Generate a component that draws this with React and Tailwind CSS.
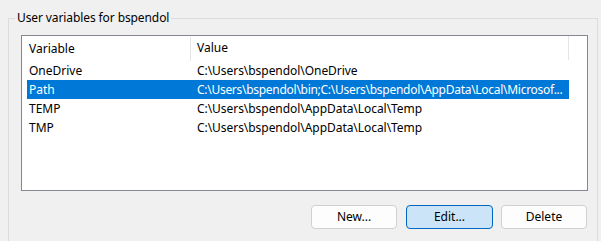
export default function App() {
  const rows = [
    { name: "OneDrive", value: "C:\\Users\\bspendol\\OneDrive" },
    { name: "Path", value: "C:\\Users\\bspendol\\bin;C:\\Users\\bspendol\\AppData\\Local\\Microsof...", selected: true },
    { name: "TEMP", value: "C:\\Users\\bspendol\\AppData\\Local\\Temp" },
    { name: "TMP", value: "C:\\Users\\bspendol\\AppData\\Local\\Temp" },
  ];
  return (
    <div
      className="w-[601px] h-[241px] bg-[#f0f0f0] overflow-hidden text-[12px] text-black"
      style={{ fontFamily: '"Noto Sans", "Open Sans", sans-serif' }}
    >
      <div className="relative ml-[8px] mt-[18px] w-[590px] h-[240px] border border-[#dcdcdc] pl-[12px] pt-[16px]">
        <div className="absolute left-[6px] top-[-9px] px-[2px] bg-[#f0f0f0] leading-[16px] tracking-[-0.1px]">
          User variables for bspendol
        </div>
        <div className="w-[567px] h-[156px] border border-[#828790] bg-white">
          <div className="flex h-[24px] items-center leading-[16px]">
            <div className="w-[169px] pl-[7px] h-full flex items-center border-r border-[#e5e5e5] mt-[1px]">Variable</div>
            <div className="w-[378px] pl-[6px] h-full flex items-center border-r border-[#e5e5e5]">Value</div>
          </div>
          <div className="mt-[1px]">
            {rows.map((r) => (
              <div
                key={r.name}
                className={
                  "ml-[5px] w-[542px] h-[19px] flex items-center leading-[19px] " +
                  (r.selected ? "bg-[#0078d7] text-white" : "")
                }
              >
                <div className="w-[170px] pl-[2px] shrink-0">{r.name}</div>
                <div
                  className={
                    "flex-1 min-w-0 whitespace-nowrap overflow-hidden " +
                    (r.selected ? "tracking-[-0.28px]" : "tracking-[-0.05px]")
                  }
                >
                  {r.value}
                </div>
              </div>
            ))}
          </div>
        </div>
        <div className="w-[567px] flex justify-end mt-[14px] gap-[8px]">
          <button className="w-[86px] h-[24px] rounded-[4px] border border-[#d0d0d0] bg-[#fdfdfd] leading-[16px] mr-[1px]">
            New...
          </button>
          <button className="w-[87px] h-[24px] rounded-[4px] border border-[#0067c0] bg-[#cce4f7] leading-[16px]">
            Edit...
          </button>
          <button className="w-[86px] h-[24px] rounded-[4px] border border-[#d0d0d0] bg-[#fdfdfd] leading-[16px] mr-[1px]">
            Delete
          </button>
        </div>
      </div>
    </div>
  );
}
